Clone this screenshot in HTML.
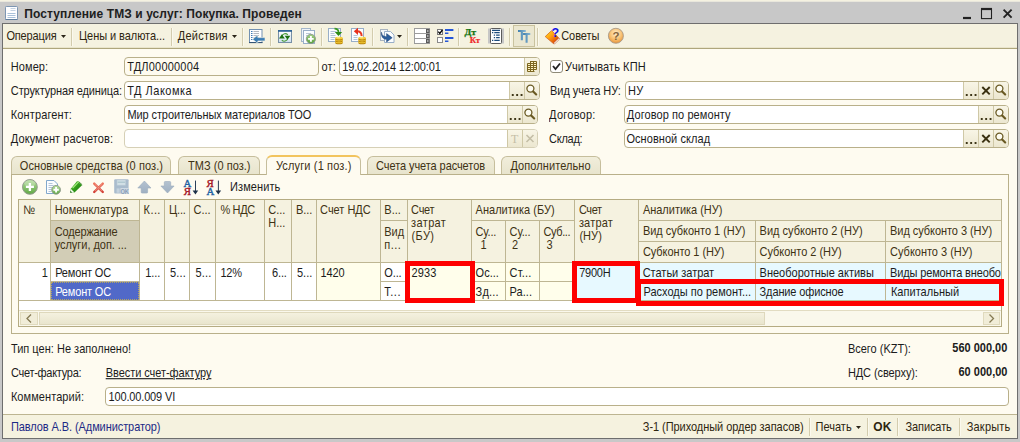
<!DOCTYPE html>
<html><head><meta charset="utf-8"><title>Поступление ТМЗ и услуг</title>
<style>
html,body{margin:0;padding:0;}
body{width:1020px;height:442px;overflow:hidden;position:relative;background:#c8c8c8;font-family:"Liberation Sans",sans-serif;font-size:11px;color:#1c1c1c;}
.a{position:absolute;}
.t{position:absolute;white-space:nowrap;line-height:14px;height:14px;transform:scaleY(1.12);transform-origin:0 10.9px;}
.sep{position:absolute;width:1px;background:#d3ccae;top:28px;height:18px;box-shadow:1px 0 0 #fbf9ee;}
.fld{position:absolute;box-sizing:border-box;border:1px solid #b9b08a;border-radius:4px;background:#fff;height:19px;overflow:hidden;}
.fld.ro{background:#fefbf0;}
.fld.dis{background:#fff;border-color:#d6d0b6;}
.btn{position:absolute;box-sizing:border-box;top:0;height:17px;width:15px;background:linear-gradient(#f8f5e6,#ece7d0);border-left:1px solid #cfc8a6;}
.btn svg{position:absolute;left:0;top:0;}
.tab{position:absolute;box-sizing:border-box;top:156px;height:18px;background:linear-gradient(#f1eedb,#e8e4cd);border:1px solid #c6be9c;border-bottom:none;border-radius:6px 6px 0 0;}
.tab.act{top:155px;height:20px;background:#fefbf0;border-top:2px solid #f2c45e;}
.hc{position:absolute;box-sizing:border-box;background:#f5f2e0;border-right:1px solid #beb693;border-bottom:1px solid #beb693;}
.dc{position:absolute;box-sizing:border-box;background:#fff;border-right:1px solid #beb693;border-bottom:1px solid #beb693;}
.red{position:absolute;box-sizing:border-box;border:5px solid #fe0000;}
</style></head><body>
<div class="a" style="left:0px;top:0px;width:1020px;height:1px;background:#f5f2e1;"></div>
<div class="a" style="left:0px;top:1px;width:1020px;height:1px;background:#e9e7dc;"></div>
<div class="a" style="left:0px;top:2px;width:1020px;height:21px;background:#c8c8c8;"></div>
<div class="a" style="left:2px;top:23px;width:1016px;height:416px;background:#6e6e6e;"></div>
<div class="a" style="left:3px;top:24px;width:1014px;height:414px;background:#fefbf0;"></div>
<div class="a" style="left:3px;top:24px;width:1014px;height:24px;background:#f5f2e0;"></div>
<div class="a" style="left:3px;top:47px;width:1014px;height:1px;background:#e9e5cc;"></div>
<div class="a" style="left:3px;top:48px;width:1014px;height:1px;background:#aea67c;"></div>
<div class="a" style="left:3px;top:414px;width:1014px;height:1px;background:#bdb591;"></div>
<div class="a" style="left:3px;top:415px;width:1014px;height:23px;background:#f5f2df;"></div>
<svg class="a" style="left:5px;top:6px" width="13" height="14" viewBox="0 0 13 14"><rect x="0.5" y="0.5" width="12" height="13" rx="0.8" fill="#fefeff" stroke="#7d96b2"/><path d="M0.5 13.5h12" stroke="#5f7d9c"/><path d="M5.5 2.5h5M5.5 4.5h5" stroke="#c3d2e2"/><path d="M2.5 7.5h8M2.5 9.5h8M2.5 11.5h8" stroke="#a9c1d9"/></svg>
<div class="t" style="left:24.3px;top:7px;letter-spacing:0.09px;font-weight:bold;font-size:12px;color:#202020;">Поступление ТМЗ и услуг: Покупка. Проведен</div>
<svg class="a" style="left:960px;top:4px" width="56" height="18" viewBox="0 0 56 18"><path d="M3 14h8" stroke="#222" stroke-width="2.2"/><rect x="21.5" y="5" width="10" height="9.6" fill="none" stroke="#222" stroke-width="1.1"/><path d="M21 5h11" stroke="#222" stroke-width="2.2"/><path d="M43.6 5.6l8 8M51.6 5.6l-8 8" stroke="#222" stroke-width="1.9"/></svg>
<div class="t" style="left:6.4px;top:29px;letter-spacing:-0.14px;color:#2e2610;">Операция</div>
<div class="t" style="left:79.0px;top:29px;letter-spacing:-0.06px;color:#2e2610;">Цены и валюта...</div>
<div class="t" style="left:177.8px;top:29px;letter-spacing:0.22px;color:#2e2610;">Действия</div>
<div class="t" style="left:561.2px;top:29px;letter-spacing:-0.06px;color:#2e2610;">Советы</div>
<svg class="a" style="left:61px;top:35px" width="5" height="3" viewBox="0 0 5 3"><path d="M0 0h5l-2.5 3z" fill="#2a2418"/></svg>
<svg class="a" style="left:232px;top:35px" width="5" height="3" viewBox="0 0 5 3"><path d="M0 0h5l-2.5 3z" fill="#2a2418"/></svg>
<svg class="a" style="left:397px;top:35px" width="5" height="3" viewBox="0 0 5 3"><path d="M0 0h5l-2.5 3z" fill="#2a2418"/></svg>
<div class="sep" style="left:71px"></div>
<div class="sep" style="left:171px"></div>
<div class="sep" style="left:242px"></div>
<div class="sep" style="left:270px"></div>
<div class="sep" style="left:321px"></div>
<div class="sep" style="left:372px"></div>
<div class="sep" style="left:407px"></div>
<div class="sep" style="left:458px"></div>
<div class="sep" style="left:509px"></div>
<div class="sep" style="left:537px"></div>
<div class="a" style="left:513px;top:25px;width:22px;height:22px;background:#ebe7d0;box-sizing:border-box;border:1px solid #c9c29e;"></div>
<svg class="a" style="left:0;top:0" width="1020" height="442" viewBox="0 0 1020 442"><defs><linearGradient id="gpl" x1="0" y1="0" x2="0" y2="1"><stop offset="0" stop-color="#a6d488"/><stop offset="1" stop-color="#55a03a"/></linearGradient><linearGradient id="gbook" x1="0" y1="0" x2="1" y2="1"><stop offset="0" stop-color="#fff020"/><stop offset="0.45" stop-color="#ff9a10"/><stop offset="1" stop-color="#c82404"/></linearGradient><radialGradient id="ghelp" cx="0.5" cy="0.35" r="0.65"><stop offset="0" stop-color="#fff0d0"/><stop offset="0.6" stop-color="#f8c070"/><stop offset="1" stop-color="#e8943a"/></radialGradient><linearGradient id="gtt" x1="0" y1="0" x2="1" y2="0"><stop offset="0" stop-color="#3f7fae"/><stop offset="1" stop-color="#8ab6d2"/></linearGradient><linearGradient id="gwin" x1="0" y1="0" x2="0" y2="1"><stop offset="0" stop-color="#ffffff"/><stop offset="1" stop-color="#cfe0f0"/></linearGradient></defs><rect x="249.5" y="29.5" width="12.5" height="13" fill="#fdfeff" stroke="#7391b2"/><path d="M249 42.6h13.5" stroke="#2f4f70" stroke-width="1"/><path d="M251 31.5h1.5" stroke="#3c78b4"/><path d="M253.5 31.5h5.5" stroke="#b4b8c0"/><path d="M251 33.5h1.5" stroke="#3c78b4"/><path d="M253.5 33.5h5.5" stroke="#b4b8c0"/><path d="M251 35.5h1.5" stroke="#3c78b4"/><path d="M253.5 35.5h5.5" stroke="#b4b8c0"/><path d="M251 37.5h1.5" stroke="#3c78b4"/><path d="M253.5 37.5h5.5" stroke="#b4b8c0"/><path d="M251 39.5h1.5" stroke="#3c78b4"/><path d="M253.5 39.5h5.5" stroke="#b4b8c0"/><path d="M252.6 39.2l5.2-4.2v2.6h7.2v3.3h-7.2v2.6z" fill="#3a7cb4" stroke="#f5f2e0" stroke-width="0.6"/><rect x="278.5" y="30.5" width="13" height="12" fill="url(#gwin)" stroke="#7890a6"/><rect x="278" y="30" width="14" height="1.8" fill="#2f6496"/><path d="M281.9 36a3.5 3.5 0 0 1 5.9-1.2" fill="none" stroke="#4a9c36" stroke-width="1.1"/><path d="M287.7 38.6a3.5 3.5 0 0 1 -5.9 1.5" fill="none" stroke="#4a9c36" stroke-width="1.1"/><path d="M279 38.5h5.8l-2.9-4.3z" fill="#1c7010"/><path d="M284.7 35.7h5.6l-2.8 4.1z" fill="#1c7010"/><rect x="301.5" y="28.5" width="9" height="13" fill="#eef3f8" stroke="#a4b6ca"/><rect x="303.5" y="30.5" width="11" height="13" fill="#fbfdff" stroke="#98aec8"/><path d="M306 33.5h5M306 35.5h3" stroke="#b9c7d8"/><circle cx="310.9" cy="38.9" r="4.6" fill="url(#gpl)" stroke="#8f9a8a" stroke-width="0.9"/><path d="M308.09999999999997 38.9H313.7M310.9 36.1V41.699999999999996" stroke="#fff" stroke-width="1.9"/><rect x="328.5" y="28.5" width="12" height="13" fill="#fbfdff" stroke="#98aec8"/><path d="M330.5 31.5h6M330.5 33.5h4M330.5 35.5h5M330.5 37.5h5M330.5 39.5h4" stroke="#b3c4d8"/><path d="M334.5 28.6c3 0 4 1.4 4 3.6" fill="none" stroke="#3c9a24" stroke-width="1.8"/><path d="M334.8 31.9h7.4l-3.7 4.2z" fill="#2c8a18"/><ellipse cx="339.0" cy="42.699999999999996" rx="3.8" ry="1.5" fill="#b88408"/><ellipse cx="339.0" cy="41.9" rx="3.8" ry="1.4" fill="#f4cc38"/><ellipse cx="338.4" cy="41.6" rx="2" ry="0.5" fill="#fff0a0"/><ellipse cx="339.0" cy="40.8" rx="3.8" ry="1.5" fill="#b88408"/><ellipse cx="339.0" cy="40.0" rx="3.8" ry="1.4" fill="#f4cc38"/><ellipse cx="338.4" cy="39.7" rx="2" ry="0.5" fill="#fff0a0"/><ellipse cx="339.0" cy="38.9" rx="3.8" ry="1.5" fill="#b88408"/><ellipse cx="339.0" cy="38.1" rx="3.8" ry="1.4" fill="#f4cc38"/><ellipse cx="338.4" cy="37.800000000000004" rx="2" ry="0.5" fill="#fff0a0"/><rect x="351.5" y="28.5" width="12" height="13" fill="#fbfdff" stroke="#98aec8"/><path d="M353.5 35.5h4M353.5 37.5h4M353.5 39.5h4" stroke="#b3c4d8"/><path d="M357 31.3c3.6 0 4.6 1.8 4.6 4.6" fill="none" stroke="#e83a22" stroke-width="2"/><path d="M353.8 31.3l4.2-3.6v7.2z" fill="#e8301c"/><ellipse cx="362.1" cy="42.699999999999996" rx="3.8" ry="1.5" fill="#b88408"/><ellipse cx="362.1" cy="41.9" rx="3.8" ry="1.4" fill="#f4cc38"/><ellipse cx="361.5" cy="41.6" rx="2" ry="0.5" fill="#fff0a0"/><ellipse cx="362.1" cy="40.8" rx="3.8" ry="1.5" fill="#b88408"/><ellipse cx="362.1" cy="40.0" rx="3.8" ry="1.4" fill="#f4cc38"/><ellipse cx="361.5" cy="39.7" rx="2" ry="0.5" fill="#fff0a0"/><ellipse cx="362.1" cy="38.9" rx="3.8" ry="1.5" fill="#b88408"/><ellipse cx="362.1" cy="38.1" rx="3.8" ry="1.4" fill="#f4cc38"/><ellipse cx="361.5" cy="37.800000000000004" rx="2" ry="0.5" fill="#fff0a0"/><rect x="380.5" y="29.5" width="7" height="11" fill="#f4f6f8" stroke="#a9b4c0"/><path d="M384.5 31.5h6l3.5 3.5v7.5h-9.5z" fill="#fbfdff" stroke="#98aec8"/><path d="M381.4 32.2c0.6 3.4 2.4 4.6 5.2 4.6v-3.2l5.6 4.2l-5.6 4.2v-2.8c-3.6 0-5.6-2.6-5.2-7z" fill="#2c5f9e" stroke="#1d3f6e" stroke-width="0.5"/><rect x="414.5" y="28.5" width="15" height="5" fill="#fff" stroke="#9c9c9c"/><rect x="426" y="29" width="3.5" height="4" fill="#585858"/><rect x="427.2" y="30.4" width="1.2" height="1.2" fill="#fff"/><rect x="414.5" y="33.5" width="15" height="5" fill="#fff" stroke="#9c9c9c"/><rect x="426" y="34" width="3.5" height="4" fill="#585858"/><rect x="427.2" y="35.4" width="1.2" height="1.2" fill="#fff"/><rect x="414.5" y="38.5" width="15" height="5" fill="#fff" stroke="#9c9c9c"/><rect x="426" y="39" width="3.5" height="4" fill="#585858"/><rect x="427.2" y="40.4" width="1.2" height="1.2" fill="#fff"/><path d="M414 43.5h16" stroke="#9a9a9a"/><rect x="437.5" y="29.5" width="5" height="5" fill="#fff" stroke="#7a7a7a"/><path d="M438.3 31.6l1.5 1.8l2.6-3.4" fill="none" stroke="#000" stroke-width="1.3"/><rect x="437.5" y="37.5" width="5" height="5" fill="#fff" stroke="#8a8a8a"/><path d="M445 30h8.4M445 38h8.4" stroke="#2456d8" stroke-width="1.8"/><path d="M445 33.2h3.4M445 41.2h3.4" stroke="#2456d8" stroke-width="1.6"/><text x="464.6" y="34.9" font-family="Liberation Serif,serif" font-weight="bold" font-size="8.2" fill="#157410" stroke="#157410" stroke-width="0.25" textLength="11.6" lengthAdjust="spacingAndGlyphs">Дт</text><text x="469.7" y="42.7" font-family="Liberation Serif,serif" font-weight="bold" font-size="9.2" fill="#f02828" stroke="#f02828" stroke-width="0.2" textLength="10.5" lengthAdjust="spacingAndGlyphs">Кт</text><rect x="488" y="28.5" width="16" height="15" fill="#c6c6c6"/><rect x="490.5" y="28.5" width="11" height="15" rx="1" fill="#fff" stroke="#5a5a5a"/><path d="M492 30.4h8" stroke="#1c4c7c" stroke-width="1.3"/><path d="M492 32.7h1.3M494.3 32.7h5.4" stroke="#1c4c7c" stroke-width="1.3"/><path d="M493.8 35.2h1.3M496.1 35.2h3.6000000000000005" stroke="#1c4c7c" stroke-width="1.3"/><path d="M493.8 37.7h1.3M496.1 37.7h3.6000000000000005" stroke="#1c4c7c" stroke-width="1.3"/><path d="M492 40.3h1.3M494.3 40.3h5.4" stroke="#1c4c7c" stroke-width="1.3"/><path d="M518 30.1h7.8v2h-2.8v8.2h-2.2v-8.2h-2.8z" fill="url(#gtt)"/><path d="M523.1 33h7.2v1.9h-2.6v7.9h-2.1v-7.9h-2.5z" fill="url(#gtt)"/><path d="M545.2 36.6l6.4-6l7.4 7.6l-5.6 5.4z" fill="url(#gbook)" stroke="#c84808" stroke-width="0.6"/><path d="M553.6 43l5.2-5l0.9 1l-5.2 5z" fill="#fff" stroke="#b03a08" stroke-width="0.5"/><text x="551.6" y="37.3" font-family="Liberation Sans,sans-serif" font-weight="bold" font-size="12.6" fill="#1212e6">?</text><circle cx="615.9" cy="35.8" r="7.5" fill="url(#ghelp)" stroke="#a89a88" stroke-width="0.9"/><text x="612.6" y="40" font-family="Liberation Sans,sans-serif" font-weight="bold" font-size="11.5" fill="#86643a">?</text></svg>
<div class="t" style="left:10.8px;top:60px;letter-spacing:0.08px;">Номер:</div>
<div class="t" style="left:10.8px;top:84px;letter-spacing:-0.11px;">Структурная единица:</div>
<div class="t" style="left:10.8px;top:108px;letter-spacing:0.12px;">Контрагент:</div>
<div class="t" style="left:10.8px;top:132px;letter-spacing:0.08px;">Документ расчетов:</div>
<div class="t" style="left:321.6px;top:60px;letter-spacing:0.11px;">от:</div>
<div class="t" style="left:564.9px;top:60px;letter-spacing:0.10px;">Учитывать КПН</div>
<div class="t" style="left:550.1px;top:84px;letter-spacing:-0.08px;">Вид учета НУ:</div>
<div class="t" style="left:549.1px;top:108px;letter-spacing:0.24px;">Договор:</div>
<div class="t" style="left:549.1px;top:132px;letter-spacing:-0.28px;">Склад:</div>
<div class="fld ro" style="left:124px;top:57px;width:195px;"></div>
<div class="t" style="left:127.2px;top:60px;letter-spacing:0.19px;">ТДЛ00000004</div>
<div class="fld " style="left:339px;top:57px;width:201px;"><div class="btn" style="left:184px"><svg width="14" height="17" viewBox="0 0 14 17"><path d="M5 3.5h6.5v8h-2v2h-7v-8h2.5z" fill="#fdf3c4"/><path d="M5 3.5h6.5M2.5 5.5h9M2.5 7.5h9M2.5 9.5h9M2.5 11.5h9M2.5 13.5h7M2.5 5.5v8M5.5 3.5v10M8.5 3.5v10M11.5 3.5v8" stroke="#7c6620" stroke-width="1" fill="none"/></svg></div></div>
<div class="t" style="left:342.2px;top:60px;letter-spacing:-0.13px;">19.02.2014 12:00:01</div>
<div class="fld " style="left:124px;top:81px;width:416px;"><div class="btn" style="left:384px"><svg width="14" height="17" viewBox="0 0 14 17"><path d="M1.8 12h1.9v1.9h-1.9zM6.2 12h1.9v1.9h-1.9zM10.6 12h1.9v1.9h-1.9z" fill="#3e3618"/></svg></div><div class="btn" style="left:399px"><svg width="14" height="17" viewBox="0 0 14 17"><circle cx="5.4" cy="6.6" r="3.5" fill="#fdfcf2" stroke="#6a5a24" stroke-width="1.3"/><path d="M8.2 9.4l3 3" stroke="#6a5a24" stroke-width="2.1" stroke-linecap="round"/></svg></div></div>
<div class="t" style="left:127.2px;top:84px;letter-spacing:0.50px;">ТД Лакомка</div>
<div class="fld " style="left:124px;top:105px;width:414px;"><div class="btn" style="left:382px"><svg width="14" height="17" viewBox="0 0 14 17"><path d="M1.8 12h1.9v1.9h-1.9zM6.2 12h1.9v1.9h-1.9zM10.6 12h1.9v1.9h-1.9z" fill="#3e3618"/></svg></div><div class="btn" style="left:397px"><svg width="14" height="17" viewBox="0 0 14 17"><circle cx="5.4" cy="6.6" r="3.5" fill="#fdfcf2" stroke="#6a5a24" stroke-width="1.3"/><path d="M8.2 9.4l3 3" stroke="#6a5a24" stroke-width="2.1" stroke-linecap="round"/></svg></div></div>
<div class="t" style="left:127.4px;top:108px;letter-spacing:-0.09px;">Мир строительных материалов ТОО</div>
<div class="fld dis" style="left:124px;top:129px;width:414px;"><div class="btn" style="left:382px"><svg width="14" height="17" viewBox="0 0 14 17"><text x="3" y="13" font-family="Liberation Serif,serif" font-size="12" fill="#c4bea6">T</text></svg></div><div class="btn" style="left:397px"><svg width="14" height="17" viewBox="0 0 14 17"><path d="M3.5 5l7 7M10.5 5l-7 7" stroke="#c4bea6" stroke-width="1.6"/></svg></div></div>
<div class="fld " style="left:625px;top:81px;width:384px;"><div class="btn" style="left:337px"><svg width="14" height="17" viewBox="0 0 14 17"><path d="M1.8 12h1.9v1.9h-1.9zM6.2 12h1.9v1.9h-1.9zM10.6 12h1.9v1.9h-1.9z" fill="#3e3618"/></svg></div><div class="btn" style="left:352px"><svg width="14" height="17" viewBox="0 0 14 17"><path d="M3.3 5l7.4 7.4M10.7 5l-7.4 7.4" stroke="#3a3010" stroke-width="1.9"/></svg></div><div class="btn" style="left:367px"><svg width="14" height="17" viewBox="0 0 14 17"><circle cx="5.4" cy="6.6" r="3.5" fill="#fdfcf2" stroke="#6a5a24" stroke-width="1.3"/><path d="M8.2 9.4l3 3" stroke="#6a5a24" stroke-width="2.1" stroke-linecap="round"/></svg></div></div>
<div class="t" style="left:628.1px;top:84px;letter-spacing:0.20px;">НУ</div>
<div class="fld " style="left:624px;top:105px;width:385px;"><div class="btn" style="left:353px"><svg width="14" height="17" viewBox="0 0 14 17"><path d="M1.8 12h1.9v1.9h-1.9zM6.2 12h1.9v1.9h-1.9zM10.6 12h1.9v1.9h-1.9z" fill="#3e3618"/></svg></div><div class="btn" style="left:368px"><svg width="14" height="17" viewBox="0 0 14 17"><circle cx="5.4" cy="6.6" r="3.5" fill="#fdfcf2" stroke="#6a5a24" stroke-width="1.3"/><path d="M8.2 9.4l3 3" stroke="#6a5a24" stroke-width="2.1" stroke-linecap="round"/></svg></div></div>
<div class="t" style="left:626.8px;top:108px;letter-spacing:0.08px;">Договор по ремонту</div>
<div class="fld " style="left:624px;top:129px;width:385px;"><div class="btn" style="left:338px"><svg width="14" height="17" viewBox="0 0 14 17"><path d="M1.8 12h1.9v1.9h-1.9zM6.2 12h1.9v1.9h-1.9zM10.6 12h1.9v1.9h-1.9z" fill="#3e3618"/></svg></div><div class="btn" style="left:353px"><svg width="14" height="17" viewBox="0 0 14 17"><path d="M3.3 5l7.4 7.4M10.7 5l-7.4 7.4" stroke="#3a3010" stroke-width="1.9"/></svg></div><div class="btn" style="left:368px"><svg width="14" height="17" viewBox="0 0 14 17"><circle cx="5.4" cy="6.6" r="3.5" fill="#fdfcf2" stroke="#6a5a24" stroke-width="1.3"/><path d="M8.2 9.4l3 3" stroke="#6a5a24" stroke-width="2.1" stroke-linecap="round"/></svg></div></div>
<div class="t" style="left:626.4px;top:132px;letter-spacing:0.06px;">Основной склад</div>
<div class="a" style="left:550px;top:60px;width:13px;height:13px;box-sizing:border-box;border:1px solid #8e8a78;border-radius:3px;background:#fff;"></div>
<svg class="a" style="left:550px;top:60px" width="13" height="13" viewBox="0 0 13 13"><path d="M3 6l2.5 3L10 3.5" fill="none" stroke="#222" stroke-width="1.8"/></svg>
<div class="a" style="left:11px;top:174px;width:998px;height:160px;background:#b9b08a;"></div>
<div class="a" style="left:12px;top:175px;width:996px;height:158px;background:#fefbf0;"></div>
<div class="tab" style="left:11px;width:160px"></div>
<div class="t" style="left:19.8px;top:159px;letter-spacing:0.08px;color:#3e3214;">Основные средства (0 поз.)</div>
<div class="tab" style="left:178px;width:82px"></div>
<div class="t" style="left:188.1px;top:159px;letter-spacing:0.02px;color:#3e3214;">ТМЗ (0 поз.)</div>
<div class="tab act" style="left:266px;width:95px"></div>
<div class="t" style="left:275.9px;top:159px;letter-spacing:0.15px;color:#3e3214;">Услуги (1 поз.)</div>
<div class="tab" style="left:367px;width:128px"></div>
<div class="t" style="left:376.1px;top:159px;letter-spacing:-0.08px;color:#3e3214;">Счета учета расчетов</div>
<div class="tab" style="left:501px;width:100px"></div>
<div class="t" style="left:510.4px;top:159px;letter-spacing:0.09px;color:#3e3214;">Дополнительно</div>
<div class="t" style="left:230.1px;top:180px;letter-spacing:0.08px;">Изменить</div>
<svg class="a" style="left:0;top:0" width="1020" height="442" viewBox="0 0 1020 442"><defs><linearGradient id="gpl2" x1="0" y1="0" x2="0" y2="1"><stop offset="0" stop-color="#b6de9e"/><stop offset="1" stop-color="#60a844"/></linearGradient><linearGradient id="gpen" x1="0" y1="0" x2="1" y2="1"><stop offset="0" stop-color="#52c42c"/><stop offset="1" stop-color="#147408"/></linearGradient><linearGradient id="gx" x1="0" y1="183" x2="0" y2="193" gradientUnits="userSpaceOnUse"><stop offset="0" stop-color="#f07a62"/><stop offset="1" stop-color="#cf3a32"/></linearGradient><linearGradient id="garr" x1="0" y1="0" x2="0" y2="1"><stop offset="0" stop-color="#b4c2d0"/><stop offset="1" stop-color="#9fb0c2"/></linearGradient></defs><circle cx="29.9" cy="186.9" r="7.4" fill="url(#gpl2)" stroke="#959c90" stroke-width="1"/><ellipse cx="29.9" cy="183.6" rx="5.6" ry="3.4" fill="#fff" opacity="0.22"/><path d="M25.9 186.9h8M29.9 182.9v8" stroke="#fff" stroke-width="2.3"/><path d="M46.5 180.5h7.5l3.5 3.5v9.5h-11z" fill="#fbfdff" stroke="#82a8cc"/><path d="M48.5 183.5h4M48.5 185.5h5M48.5 187.5h4M48.5 189.5h3M48.5 191.5h3" stroke="#b3c4d8"/><circle cx="56.1" cy="189.8" r="4.4" fill="url(#gpl2)" stroke="#8f9a8a" stroke-width="0.9"/><path d="M53.4 189.8h5.4M56.1 187.1v5.4" stroke="#fff" stroke-width="1.9"/><path d="M70.2 192.8L70.8 188.7L77.2 181L82 185.2L74.5 192.4Z" fill="url(#gpen)"/><path d="M70.2 192.8L70.8 188.7L74.5 192.4Z" fill="#f4fff0"/><path d="M70.2 192.8l0.3-2l1.6 1.7z" fill="#145c08"/><path d="M72.6 188.2l6.2-6.6" stroke="#a6ec80" stroke-width="1.2"/><path d="M78.6 181.6l3.6 3.2" stroke="#167008" stroke-width="0.8"/><path d="M94.2 183.6l8.6 8.4M102.8 183.6l-8.6 8.4" stroke="url(#gx)" stroke-width="2.4" stroke-linecap="round"/><path d="M95 184.4l7 6.8M102 184.4l-7 6.8" stroke="#f4a090" stroke-width="0.7"/><rect x="114.2" y="179.3" width="14.4" height="14.3" rx="1" fill="#a9bccd"/><rect x="117" y="180" width="8.6" height="5.2" fill="#d2e0e6" stroke="#b8c8d4" stroke-width="0.6"/><path d="M117.6 182.2h7.4" stroke="#a9c4cc" stroke-width="1.2"/><rect x="116.6" y="188.4" width="3" height="4.4" fill="#c4d2de"/><rect x="120.4" y="188" width="8.4" height="5.6" fill="#cfdae4"/><text x="120.4" y="193.5" font-family="Liberation Sans,sans-serif" font-weight="bold" font-size="6.8" fill="#8aa0b8" textLength="8.6" lengthAdjust="spacingAndGlyphs">OK</text><path d="M144.4 181l6.6 7h-3.4v4.2q0 0.9-0.9 0.9h-4.6q-0.9 0-0.9-0.9v-4.2h-3.4z" fill="url(#garr)" stroke="#9aabbd" stroke-width="0.6"/><path d="M167.5 193l-6.6-7h3.4v-3.6q0-0.9 0.9-0.9h4.6q0.9 0 0.9 0.9v3.6h3.4z" fill="url(#garr)" stroke="#9aabbd" stroke-width="0.6"/><text x="183.6" y="186.6" font-family="Liberation Serif,serif" font-size="10.8" stroke-width="0.4" stroke="#1f63a3" fill="#1f63a3">А</text><text x="183.8" y="194.8" font-family="Liberation Serif,serif" font-size="10.8" stroke-width="0.4" stroke="#a41424" fill="#a41424">Я</text><path d="M195.5 180.6v11" stroke="#2a3f58" stroke-width="1"/><path d="M192.6 190.6h5.6l-2.8 4z" fill="#1c3048"/><text x="206.6" y="186.9" font-family="Liberation Serif,serif" font-size="10.8" stroke-width="0.4" stroke="#a41424" fill="#a41424">Я</text><text x="206.6" y="194.7" font-family="Liberation Serif,serif" font-size="10.8" stroke-width="0.4" stroke="#1f63a3" fill="#1f63a3">А</text><path d="M218.4 180.6v11" stroke="#2a3f58" stroke-width="1"/><path d="M215.5 190.6h5.6l-2.8 4z" fill="#1c3048"/></svg>
<div class="a" style="left:18px;top:199px;width:984px;height:128px;background:#b5ab82;"></div>
<div class="a" style="left:19px;top:200px;width:982px;height:126px;background:#fff;"></div>
<div class="hc" style="left:19px;top:200px;width:32px;height:63px;"></div>
<div class="t" style="left:23.3px;top:203px;color:#3e3214;">№</div>
<div class="hc" style="left:51px;top:200px;width:89px;height:21px;"></div>
<div class="t" style="left:54.7px;top:203px;letter-spacing:-0.02px;color:#3e3214;">Номенклатура</div>
<div class="hc" style="left:51px;top:221px;width:89px;height:42px;background:#d2cdb6;"></div>
<div class="t" style="left:54.7px;top:225px;letter-spacing:-0.15px;color:#3e3214;">Содержание</div>
<div class="t" style="left:54.7px;top:238px;letter-spacing:-0.04px;color:#3e3214;">услуги, доп. ...</div>
<div class="hc" style="left:140px;top:200px;width:25px;height:63px;"></div>
<div class="t" style="left:143.6px;top:203px;letter-spacing:0.41px;color:#3e3214;">К...</div>
<div class="hc" style="left:165px;top:200px;width:25px;height:63px;"></div>
<div class="t" style="left:169.1px;top:203px;letter-spacing:-0.17px;color:#3e3214;">Ц...</div>
<div class="hc" style="left:190px;top:200px;width:26px;height:63px;"></div>
<div class="t" style="left:193.6px;top:203px;letter-spacing:-0.04px;color:#3e3214;">С...</div>
<div class="hc" style="left:216px;top:200px;width:49px;height:63px;"></div>
<div class="t" style="left:220.4px;top:203px;letter-spacing:-0.34px;color:#3e3214;">% НДС</div>
<div class="hc" style="left:292px;top:200px;width:25px;height:63px;"></div>
<div class="t" style="left:295.9px;top:203px;letter-spacing:-0.04px;color:#3e3214;">В...</div>
<div class="hc" style="left:317px;top:200px;width:64px;height:63px;"></div>
<div class="t" style="left:320.1px;top:203px;letter-spacing:-0.02px;color:#3e3214;">Счет НДС</div>
<div class="hc" style="left:265px;top:200px;width:27px;height:63px;"></div>
<div class="t" style="left:268.3px;top:203px;letter-spacing:-0.04px;color:#3e3214;">С...</div>
<div class="t" style="left:268.3px;top:216px;letter-spacing:-0.04px;color:#3e3214;">Н...</div>
<div class="hc" style="left:381px;top:200px;width:27px;height:21px;"></div>
<div class="t" style="left:384.3px;top:203px;color:#3e3214;">В...</div>
<div class="hc" style="left:381px;top:221px;width:27px;height:42px;"></div>
<div class="t" style="left:384.3px;top:225px;letter-spacing:-0.05px;color:#3e3214;">Вид</div>
<div class="t" style="left:384.3px;top:238px;letter-spacing:0.46px;color:#3e3214;">п...</div>
<div class="hc" style="left:408px;top:200px;width:64px;height:63px;"></div>
<div class="t" style="left:411.1px;top:203px;letter-spacing:-0.28px;color:#3e3214;">Счет</div>
<div class="t" style="left:411.1px;top:216px;letter-spacing:0.36px;color:#3e3214;">затрат</div>
<div class="t" style="left:411.6px;top:229px;letter-spacing:0.34px;color:#3e3214;">(БУ)</div>
<div class="hc" style="left:472px;top:200px;width:103px;height:21px;"></div>
<div class="t" style="left:475.6px;top:203px;letter-spacing:0.02px;color:#3e3214;">Аналитика (БУ)</div>
<div class="hc" style="left:472px;top:221px;width:34px;height:42px;"></div>
<div class="t" style="left:475.6px;top:225px;letter-spacing:-0.18px;color:#3e3214;">Су...</div>
<div class="t" style="left:480.4px;top:238px;color:#3e3214;">1</div>
<div class="hc" style="left:506px;top:221px;width:34px;height:42px;"></div>
<div class="t" style="left:509.6px;top:225px;letter-spacing:-0.13px;color:#3e3214;">Су...</div>
<div class="t" style="left:512.1px;top:238px;color:#3e3214;">2</div>
<div class="hc" style="left:540px;top:221px;width:35px;height:42px;"></div>
<div class="t" style="left:543.5px;top:225px;letter-spacing:-0.39px;color:#3e3214;">Суб...</div>
<div class="t" style="left:546.6px;top:238px;color:#3e3214;">3</div>
<div class="hc" style="left:575px;top:200px;width:64px;height:63px;"></div>
<div class="t" style="left:578.9px;top:203px;letter-spacing:-0.38px;color:#3e3214;">Счет</div>
<div class="t" style="left:578.9px;top:216px;letter-spacing:0.18px;color:#3e3214;">затрат</div>
<div class="t" style="left:579.4px;top:229px;letter-spacing:0.05px;color:#3e3214;">(НУ)</div>
<div class="hc" style="left:639px;top:200px;width:363px;height:21px;"></div>
<div class="t" style="left:642.9px;top:203px;letter-spacing:-0.02px;color:#3e3214;">Аналитика (НУ)</div>
<div class="hc" style="left:639px;top:221px;width:117px;height:21px;"></div>
<div class="t" style="left:642.9px;top:224px;letter-spacing:-0.03px;color:#3e3214;">Вид субконто 1 (НУ)</div>
<div class="hc" style="left:639px;top:242px;width:117px;height:21px;"></div>
<div class="t" style="left:642.9px;top:245px;letter-spacing:-0.07px;color:#3e3214;">Субконто 1 (НУ)</div>
<div class="hc" style="left:756px;top:221px;width:130px;height:21px;"></div>
<div class="t" style="left:759.6px;top:224px;color:#3e3214;">Вид субконто 2 (НУ)</div>
<div class="hc" style="left:756px;top:242px;width:130px;height:21px;"></div>
<div class="t" style="left:759.6px;top:245px;letter-spacing:-0.04px;color:#3e3214;">Субконто 2 (НУ)</div>
<div class="hc" style="left:886px;top:221px;width:116px;height:21px;"></div>
<div class="t" style="left:890.1px;top:224px;letter-spacing:-0.06px;color:#3e3214;">Вид субконто 3 (НУ)</div>
<div class="hc" style="left:886px;top:242px;width:116px;height:21px;"></div>
<div class="t" style="left:890.1px;top:245px;letter-spacing:-0.02px;color:#3e3214;">Субконто 3 (НУ)</div>
<div class="dc" style="left:19px;top:263px;width:32px;height:38px;"></div>
<div class="t" style="left:41.7px;top:266px;">1</div>
<div class="dc" style="left:51px;top:263px;width:89px;height:19px;"></div>
<div class="t" style="left:55.2px;top:266px;letter-spacing:-0.17px;">Ремонт ОС</div>
<div class="dc" style="left:51px;top:282px;width:89px;height:19px;background:#5169c8;"></div>
<div class="a" style="left:51px;top:282px;width:88px;height:18px;box-sizing:border-box;border:1px dotted #b4a462;"></div>
<div class="t" style="left:55.2px;top:285px;letter-spacing:-0.17px;color:#fff;">Ремонт ОС</div>
<div class="dc" style="left:140px;top:263px;width:25px;height:38px;"></div>
<div class="t" style="left:145.2px;top:266px;letter-spacing:-0.03px;">1...</div>
<div class="dc" style="left:165px;top:263px;width:25px;height:38px;"></div>
<div class="t" style="left:169.9px;top:266px;letter-spacing:0.24px;">5...</div>
<div class="dc" style="left:190px;top:263px;width:26px;height:38px;"></div>
<div class="t" style="left:195.4px;top:266px;letter-spacing:0.24px;">5...</div>
<div class="dc" style="left:216px;top:263px;width:49px;height:38px;"></div>
<div class="t" style="left:220.4px;top:266px;letter-spacing:-0.20px;">12%</div>
<div class="dc" style="left:265px;top:263px;width:27px;height:38px;"></div>
<div class="t" style="left:272.1px;top:266px;letter-spacing:-0.16px;">6...</div>
<div class="dc" style="left:292px;top:263px;width:25px;height:38px;"></div>
<div class="t" style="left:296.9px;top:266px;letter-spacing:0.04px;">5...</div>
<div class="dc" style="left:317px;top:263px;width:64px;height:38px;background:#fffeeb;"></div>
<div class="t" style="left:320.6px;top:266px;letter-spacing:-0.12px;">1420</div>
<div class="dc" style="left:381px;top:263px;width:27px;height:19px;"></div>
<div class="t" style="left:384.3px;top:266px;letter-spacing:-0.14px;">О...</div>
<div class="dc" style="left:381px;top:282px;width:27px;height:19px;"></div>
<div class="t" style="left:384.3px;top:285px;letter-spacing:0.50px;">Т...</div>
<div class="dc" style="left:408px;top:263px;width:64px;height:38px;background:#fffeeb;"></div>
<div class="t" style="left:411.6px;top:266px;letter-spacing:0.14px;">2933</div>
<div class="dc" style="left:472px;top:263px;width:34px;height:19px;background:#fffeeb;"></div>
<div class="t" style="left:475.6px;top:266px;letter-spacing:0.02px;">Ос...</div>
<div class="dc" style="left:472px;top:282px;width:34px;height:19px;background:#fffeeb;"></div>
<div class="t" style="left:475.6px;top:285px;letter-spacing:0.19px;">Зд...</div>
<div class="dc" style="left:506px;top:263px;width:34px;height:19px;background:#fffeeb;"></div>
<div class="t" style="left:509.6px;top:266px;letter-spacing:0.17px;">Ст...</div>
<div class="dc" style="left:506px;top:282px;width:34px;height:19px;background:#fffeeb;"></div>
<div class="t" style="left:509.6px;top:285px;letter-spacing:0.04px;">Ра...</div>
<div class="dc" style="left:540px;top:263px;width:35px;height:19px;background:#fffeeb;"></div>
<div class="dc" style="left:540px;top:282px;width:35px;height:19px;background:#fffeeb;"></div>
<div class="dc" style="left:575px;top:263px;width:64px;height:38px;background:#e7f9ff;"></div>
<div class="t" style="left:579.2px;top:266px;letter-spacing:-0.23px;">7900Н</div>
<div class="dc" style="left:639px;top:263px;width:117px;height:19px;background:#e7f9ff;"></div>
<div class="dc" style="left:639px;top:282px;width:117px;height:19px;background:#e7f9ff;"></div>
<div class="t" style="left:642.7px;top:266px;letter-spacing:-0.02px;">Статьи затрат</div>
<div class="t" style="left:643.4px;top:285px;letter-spacing:0.02px;">Расходы по ремонт...</div>
<div class="dc" style="left:756px;top:263px;width:130px;height:19px;background:#e7f9ff;"></div>
<div class="dc" style="left:756px;top:282px;width:130px;height:19px;background:#e7f9ff;"></div>
<div class="t" style="left:759.6px;top:266px;">Внеоборотные активы</div>
<div class="t" style="left:759.6px;top:285px;letter-spacing:-0.13px;">Здание офисное</div>
<div class="dc" style="left:886px;top:263px;width:116px;height:19px;background:#e7f9ff;"></div>
<div class="dc" style="left:886px;top:282px;width:116px;height:19px;background:#e7f9ff;"></div>
<div class="t" style="left:890.1px;top:266px;letter-spacing:-0.15px;overflow:hidden;width:111px;">Виды ремонта внеобо</div>
<div class="t" style="left:890.9px;top:285px;letter-spacing:0.03px;">Капитальный</div>
<div class="red" style="left:405px;top:261px;width:70px;height:42px;"></div>
<div class="red" style="left:572px;top:261px;width:68px;height:42px;"></div>
<div class="red" style="left:636px;top:279px;width:368px;height:27px;"></div>
<div class="a" style="left:19px;top:310px;width:982px;height:1px;background:#e2dcc2;"></div>
<div class="a" style="left:19px;top:311px;width:982px;height:15px;background:#faf8ec;"></div>
<div class="a" style="left:20px;top:312px;width:18px;height:13px;background:#f1edd8;box-sizing:border-box;border:1px solid #e0dabd;"></div>
<div class="a" style="left:983px;top:312px;width:17px;height:13px;background:#f1edd8;box-sizing:border-box;border:1px solid #e0dabd;"></div>
<div class="a" style="left:39px;top:312px;width:726px;height:13px;background:linear-gradient(#f4f1df,#e9e5cd);box-sizing:border-box;border:1px solid #ded8bc;"></div>
<svg class="a" style="left:20px;top:312px" width="18" height="13" viewBox="0 0 18 13"><path d="M11 2.5l-4 4l4 4" fill="none" stroke="#857a52" stroke-width="1.3"/></svg>
<svg class="a" style="left:983px;top:312px" width="17" height="13" viewBox="0 0 17 13"><path d="M6.5 2.5l4 4l-4 4" fill="none" stroke="#857a52" stroke-width="1.3"/></svg>
<div class="t" style="left:10.9px;top:342px;letter-spacing:0.02px;">Тип цен: Не заполнено!</div>
<div class="t" style="left:10.9px;top:366px;letter-spacing:-0.27px;">Счет-фактура:</div>
<div class="t" style="left:105.7px;top:366px;letter-spacing:-0.05px;text-decoration:underline;">Ввести счет-фактуру</div>
<div class="t" style="left:10.9px;top:390px;letter-spacing:0.07px;">Комментарий:</div>
<div class="fld " style="left:105px;top:387px;width:904px;"></div>
<div class="t" style="left:108.5px;top:390px;letter-spacing:-0.15px;">100.00.009 VI</div>
<div class="t" style="left:847.9px;top:342px;letter-spacing:-0.01px;">Всего (KZT):</div>
<div class="t" style="left:952.3px;top:341px;font-weight:bold;">560 000,00</div>
<div class="t" style="left:847.9px;top:366px;letter-spacing:-0.09px;">НДС (сверху):</div>
<div class="t" style="left:958.5px;top:365px;font-weight:bold;">60 000,00</div>
<div class="t" style="left:10.9px;top:420px;letter-spacing:-0.08px;color:#1c2a86;">Павлов А.В. (Администратор)</div>
<div class="t" style="left:642.8px;top:420px;letter-spacing:-0.05px;color:#2e2610;">З-1 (Приходный ордер запасов)</div>
<div class="t" style="left:815.6px;top:420px;color:#2e2610;">Печать</div>
<svg class="a" style="left:856px;top:426px" width="5" height="3" viewBox="0 0 5 3"><path d="M0 0h5l-2.5 3z" fill="#2a2418"/></svg>
<div class="t" style="left:873.3px;top:420px;letter-spacing:0.20px;font-weight:bold;font-size:12px;color:#2e2610;">OK</div>
<div class="t" style="left:905.5px;top:420px;letter-spacing:-0.10px;color:#2e2610;">Записать</div>
<div class="t" style="left:966.7px;top:420px;letter-spacing:0.21px;color:#2e2610;">Закрыть</div>
<div class="sep" style="left:809px;top:418px;height:18px"></div>
<div class="sep" style="left:867px;top:418px;height:18px"></div>
<div class="sep" style="left:897px;top:418px;height:18px"></div>
<div class="sep" style="left:959px;top:418px;height:18px"></div>
</body></html>
